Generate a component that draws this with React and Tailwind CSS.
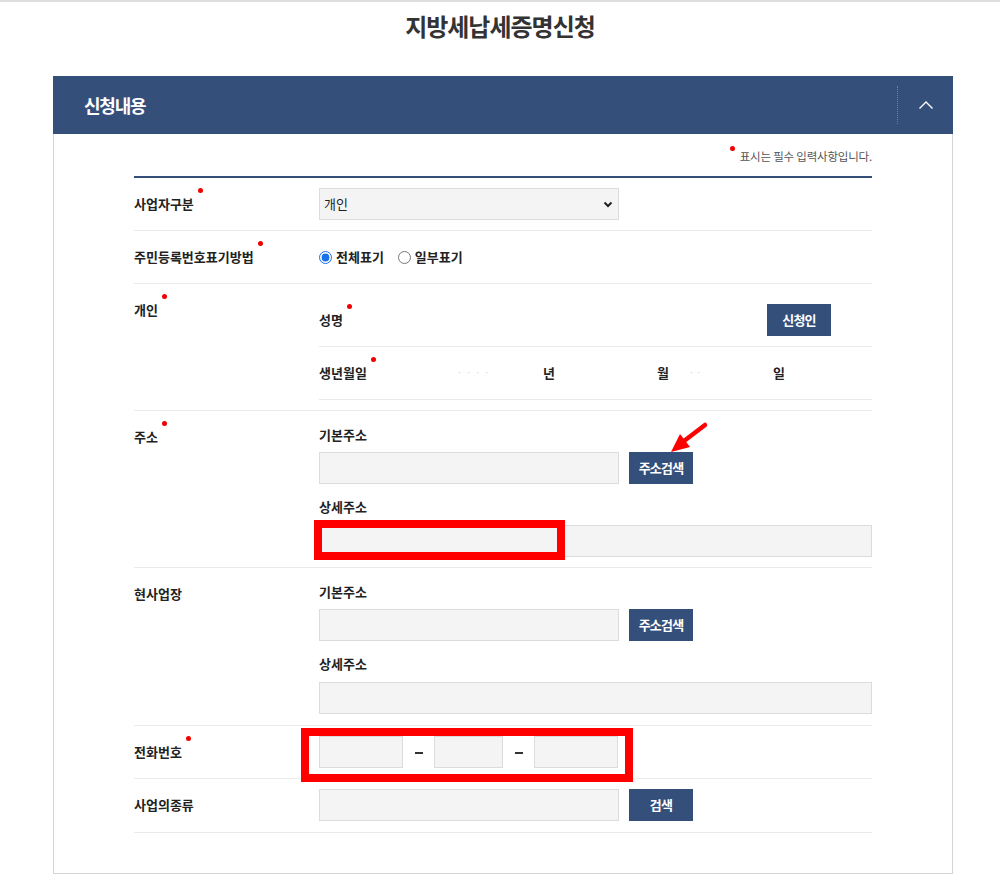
import React from 'react'

const labelCls = "text-[13px] leading-[20px] font-bold tracking-[0px] text-[#222]"

function Dot() {
  return <span className="inline-block w-[5px] h-[5px] rounded-full bg-[#f00000] ml-[4px] align-top relative -top-[6px]" />
}

function Input({ className = '' }) {
  return <div className={`h-[32px] bg-[#f4f4f4] border border-[#dcdcdc] ${className}`} />
}

function Btn({ children }) {
  return (
    <button className="h-[32px] w-[64px] ml-[10px] bg-[#354f7b] text-white text-[13px] font-bold tracking-[-0.8px]">
      {children}
    </button>
  )
}

function Row({ label, req, children }) {
  return (
    <div className="grid grid-cols-[185px_1fr] border-b border-[#ebebeb]">
      <div className={`pt-[16px] ${labelCls}`}>
        {label}{req && <Dot />}
      </div>
      <div>{children}</div>
    </div>
  )
}

function AddressBlock({ last }) {
  return (
    <div className={last ? 'pt-[14px] pb-[11px]' : 'pt-[14px] pb-[10px]'}>
      <p className={labelCls}>기본주소</p>
      <div className="flex mt-[7px]">
        <Input className="w-[300px]" />
        <Btn>주소검색</Btn>
      </div>
      <p className={`mt-[13px] ${labelCls}`}>상세주소</p>
      <Input className="mt-[8px] w-full" />
    </div>
  )
}

function Dash() {
  return (
    <div className="w-[31px] flex justify-center pt-[1px]">
      <div className="w-[8px] h-[2px] bg-[#333]" />
    </div>
  )
}

export default function App() {
  return (
    <div className="relative min-h-[886px] bg-white border-t-2 border-[#dedede] text-[#222] font-['Noto_Sans_CJK_KR',sans-serif]">
      <h1 className="pt-[7px] text-center text-[24px] leading-[34px] font-bold tracking-[-1px] text-[#333]">
        지방세납세증명신청
      </h1>

      <section className="ml-[53px] mt-[33px] w-[900px]">
        {/* Header */}
        <div className="h-[58px] bg-[#354f7b] flex items-center justify-between pl-[31px]">
          <h2 className="text-white text-[18px] font-bold tracking-[-1.2px]">신청내용</h2>
          <div className="h-[38px] w-[56px] border-l border-dotted border-[#6c80a6] flex items-center justify-center">
            <svg width="16" height="10" viewBox="0 0 16 10" fill="none">
              <path d="M1.5 8.5 L8 2 L14.5 8.5" stroke="#fff" strokeWidth="1.4" />
            </svg>
          </div>
        </div>

        {/* Body */}
        <div className="border-x border-b border-[#d5d5d5] px-[80px] pb-[40px]">
          <p className="pt-[13px] pb-[11px] text-right text-[11.5px] leading-[18px] tracking-[-0.2px] text-[#555]">
            <span className="inline-block w-[5px] h-[5px] rounded-full bg-[#f00000] mr-[5px] align-top relative -top-[1px]" />
            표시는 필수 입력사항입니다.
          </p>
          <div className="border-t-2 border-[#354f7b]" />

          <Row label="사업자구분" req>
            <div className="py-[10px]">
              <div className="relative w-[300px] h-[32px] bg-[#f4f4f4] border border-[#dcdcdc] flex items-center pl-[4px] text-[13px] text-[#222]">
                개인
                <svg className="absolute right-[5px] top-[12px]" width="10" height="7" viewBox="0 0 10 7" fill="none">
                  <path d="M1.5 1.5 L5 5 L8.5 1.5" stroke="#222" strokeWidth="2" />
                </svg>
              </div>
            </div>
          </Row>

          <Row label="주민등록번호표기방법" req>
            <div className="py-[10px] h-[52px] flex items-center">
              <label className={`flex items-center ${labelCls}`}>
                <input type="radio" name="rrn" defaultChecked className="w-[13px] h-[13px] m-0 mr-[4px] accent-[#1b72e8]" />
                전체표기
              </label>
              <label className={`flex items-center ml-[14px] ${labelCls}`}>
                <input type="radio" name="rrn" className="w-[13px] h-[13px] m-0 mr-[4px]" />
                일부표기
              </label>
            </div>
          </Row>

          <Row label="개인" req>
            <div className="pt-[10px] pb-[10px]">
              <div className="py-[10px] flex items-center justify-between border-b border-[#ebebeb]">
                <span className={labelCls}>성명<Dot /></span>
                <button className="h-[32px] w-[64px] mr-[41px] bg-[#354f7b] text-white text-[13px] font-bold tracking-[-0.8px]">신청인</button>
              </div>
              <div className="h-[53px] flex items-center border-b border-[#ebebeb]">
                <span className={`w-[138px] ${labelCls}`}>생년월일<Dot /></span>
                <span className="w-[86px] text-[9px] text-[#d4d4d4] tracking-[1px]">· · · ·</span>
                <span className={labelCls}>년</span>
                <span className={`ml-[102px] ${labelCls}`}>월</span>
                <span className="ml-[20px] text-[9px] text-[#d4d4d4]">· ·</span>
                <span className={`ml-[72px] ${labelCls}`}>일</span>
              </div>
            </div>
          </Row>

          <Row label="주소" req>
            <AddressBlock />
          </Row>

          <Row label="현사업장">
            <AddressBlock last />
          </Row>

          <Row label="전화번호" req>
            <div className="py-[10px] flex items-center">
              <Input className="w-[84px]" />
              <Dash />
              <Input className="w-[69px]" />
              <Dash />
              <Input className="w-[84px]" />
            </div>
          </Row>

          <Row label="사업의종류">
            <div className="pt-[10px] pb-[11px] flex">
              <Input className="w-[300px]" />
              <Btn>검색</Btn>
            </div>
          </Row>
        </div>
      </section>

      {/* annotations */}
      <div className="absolute left-[314px] top-[518px] w-[251px] h-[40px] border-[8px] border-[#ff0000]" />
      <div className="absolute left-[301px] top-[726px] w-[332px] h-[54px] border-[8px] border-[#ff0000]" />
      <svg className="absolute left-[660px] top-[415px]" width="55" height="40" viewBox="660 415 55 40">
        <path d="M705 423 L684 439" stroke="#ff0000" strokeWidth="4.5" strokeLinecap="round" />
        <polygon points="671,450 680,432 690,445" fill="#ff0000" />
      </svg>
    </div>
  )
}
